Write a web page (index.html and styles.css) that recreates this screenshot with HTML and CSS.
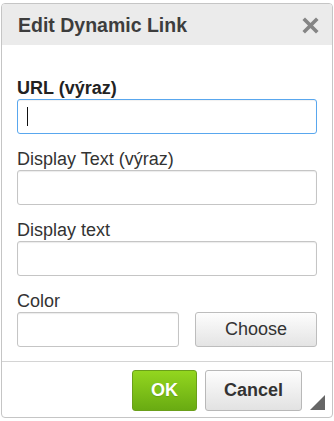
FILE: index.html
```html
<!DOCTYPE html>
<html lang="en">
<head>
    <meta charset="UTF-8">
    <title>Edit Dynamic Link</title>
    <link rel="stylesheet" href="styles.css">
</head>
<body>
    <div class="dialog">
        <div class="dialog-head">
            <span class="dialog-title">Edit Dynamic Link</span>
            <span class="dialog-close">
                <svg width="17" height="17" viewBox="0 0 17 17">
                    <path d="M3 3 L14 14 M14 3 L3 14" stroke="#858585" stroke-width="3.6" stroke-linecap="square" fill="none"/>
                </svg>
            </span>
        </div>
        <div class="dialog-body">
            <div class="field">
                <label class="field-label strong">URL (výraz)</label>
                <div class="input-wrap">
                    <input type="text" class="textbox focused">
                    <span class="caret"></span>
                </div>
            </div>
            <div class="field">
                <label class="field-label">Display Text (výraz)</label>
                <input type="text" class="textbox">
            </div>
            <div class="field">
                <label class="field-label">Display text</label>
                <input type="text" class="textbox">
            </div>
            <div class="field">
                <label class="field-label">Color</label>
                <div class="color-row">
                    <input type="text" class="textbox color-box">
                    <button class="btn btn-choose">Choose</button>
                </div>
            </div>
        </div>
        <div class="dialog-foot">
            <button class="btn btn-ok">OK</button>
            <button class="btn btn-cancel">Cancel</button>
            <span class="resize"></span>
        </div>
    </div>
</body>
</html>
```
FILE: styles.css
```css
html, body {
    margin: 0;
    padding: 0;
    background: #fff;
}
body {
    font-family: "Liberation Sans", Arial, sans-serif;
    color: #333;
}
.dialog {
    margin: 3px 1px 0 1px;
    border: 1px solid #c5c5c5;
    border-radius: 4px;
    overflow: hidden;
    background: #fff;
}
.dialog-head {
    background: #ebebeb;
    height: 41px;
    padding: 0 13px 0 16px;
    display: flex;
    justify-content: space-between;
    align-items: center;
}
.dialog-title {
    font-size: 19.5px;
    line-height: 20px;
    font-weight: bold;
    color: #3d3d3d;
    padding-top: 1px;
}
.dialog-close {
    display: flex;
    padding-top: 1px;
}
.dialog-body {
    padding: 33px 15px 14px 15px;
    display: flex;
    flex-direction: column;
    gap: 15px;
}
.field {
    display: flex;
    flex-direction: column;
}
.field-label {
    font-size: 18px;
    line-height: 21px;
    height: 21px;
    color: #333;
}
.field-label.strong {
    font-weight: bold;
    color: #222;
}
.input-wrap {
    position: relative;
}
.textbox {
    box-sizing: border-box;
    width: 100%;
    height: 35px;
    margin: 0;
    border: 1px solid #c5c5c5;
    border-radius: 3px;
    box-shadow: inset 0 1px 1px rgba(0, 0, 0, 0.08);
    font-family: inherit;
    font-size: 18px;
    padding: 0 8px;
    outline: none;
    background: #fff;
}
.textbox.focused {
    border-color: #59a7ee;
    box-shadow: inset 0 1px 1px rgba(0, 0, 0, 0.06);
}
.caret {
    position: absolute;
    left: 10px;
    top: 8px;
    width: 1px;
    height: 19px;
    background: #111;
}
.color-row {
    display: flex;
    gap: 16px;
}
.color-box {
    width: 162px;
    flex: none;
}
.btn {
    box-sizing: border-box;
    font-family: inherit;
    font-size: 18px;
    border-radius: 3px;
    cursor: pointer;
    margin: 0;
}
.btn-choose {
    flex: 1;
    height: 35px;
    border: 1px solid #bdbdbd;
    background: linear-gradient(#fdfdfd, #e4e4e4);
    color: #333;
    padding: 0;
}
.dialog-foot {
    position: relative;
    border-top: 1px solid #d4d4d4;
    padding: 8px 30px 6px 0;
    display: flex;
    justify-content: flex-end;
    gap: 8px;
}
.btn-ok {
    width: 65px;
    height: 41px;
    border: 1px solid #6a9f1a;
    background: linear-gradient(#93d61f, #69ab12);
    color: #fff;
    font-weight: bold;
    text-shadow: 0 1px 1px rgba(0, 0, 0, 0.15);
}
.btn-cancel {
    width: 97px;
    height: 41px;
    border: 1px solid #b8b8b8;
    background: linear-gradient(#fdfdfd, #e2e2e2);
    color: #333;
    font-weight: bold;
}
.resize {
    position: absolute;
    right: 7px;
    bottom: 7px;
    width: 0;
    height: 0;
    border-left: 15px solid transparent;
    border-bottom: 15px solid #666;
}
```
